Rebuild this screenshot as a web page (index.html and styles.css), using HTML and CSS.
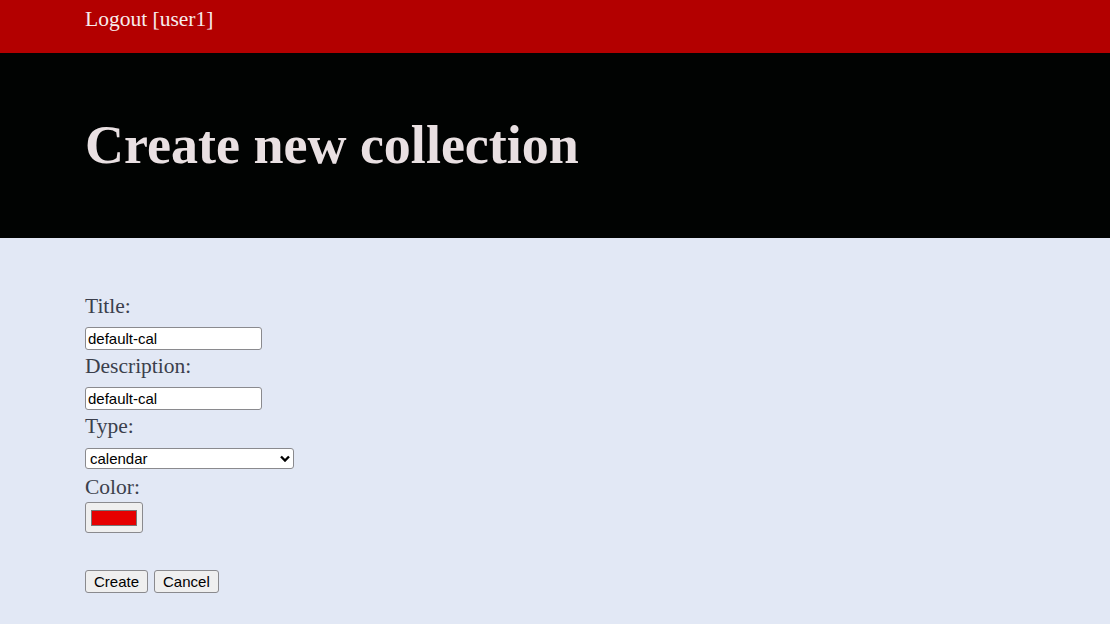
FILE: index.html
```html
<!DOCTYPE html>
<html>
<head>
<meta charset="utf-8">
<link rel="stylesheet" href="styles.css">
</head>
<body>
<div class="topbar"><a class="logout" href="#">Logout [user1]</a></div>
<header class="hero"><h1>Create new collection</h1></header>
<main class="content">
  <form class="form">
    <label class="lbl" for="t">Title:</label>
    <input class="txt" id="t" type="text" value="default-cal">
    <label class="lbl" for="d">Description:</label>
    <input class="txt" id="d" type="text" value="default-cal">
    <label class="lbl" for="ty">Type:</label>
    <select class="sel" id="ty"><option>calendar</option></select>
    <label class="lbl" for="c">Color:</label>
    <span class="color"><span class="swatch"></span></span>
    <div class="actions">
      <button class="btn" type="button">Create</button>
      <button class="btn" type="button">Cancel</button>
    </div>
  </form>
</main>
</body>
</html>
```
FILE: styles.css
```css
html, body { margin: 0; padding: 0; }
body {
  background: #e2e8f5;
  font-family: "Liberation Serif", "Times New Roman", serif;
  height: 624px;
  overflow: hidden;
}
.topbar {
  background: #b30000;
  height: 53px;
  padding-left: 85px;
  box-sizing: border-box;
}
.logout {
  color: #f7ecec;
  text-decoration: none;
  font-size: 21.5px;
  line-height: 38px;
  display: block;
}
.hero {
  background: #010302;
  height: 185px;
  padding-left: 85px;
  box-sizing: border-box;
  display: flex;
  align-items: center;
}
.hero h1 {
  margin: 0;
  color: #e9e0e2;
  font-size: 54px;
  font-weight: bold;
  position: relative;
  top: -1px;
}
.content {
  padding: 52px 85px 0;
}
.form { display: flex; flex-direction: column; align-items: flex-start; }
.lbl {
  display: block;
  font-size: 21.5px;
  line-height: 24px;
  color: #3b3f4c;
  margin-top: 4px;
  margin-bottom: 9px;
}
.txt {
  box-sizing: border-box;
  width: 177px;
  height: 23px;
  margin: 0;
  padding: 1px 2px;
  border: 1px solid #8a8a8e;
  border-radius: 3px;
  background: #fff;
  font-family: "Liberation Sans", Arial, sans-serif;
  font-size: 15px;
  color: #000;
}
.sel {
  box-sizing: border-box;
  width: 209px;
  height: 21px;
  margin: 1px 0 0 0;
  padding: 0 0 0 4px;
  border: 1px solid #8a8a8e;
  border-radius: 3px;
  background: #fff url("data:image/svg+xml,%3Csvg xmlns='http://www.w3.org/2000/svg' width='10' height='7' viewBox='0 0 10 7'%3E%3Cpath d='M1 1.5l4 4 4-4' fill='none' stroke='%23000' stroke-width='2.4'/%3E%3C/svg%3E") no-repeat right 3px center;
  -webkit-appearance: none;
  appearance: none;
  font-family: "Liberation Sans", Arial, sans-serif;
  font-size: 15px;
  line-height: 19px;
  color: #000;
}
.sel + .lbl { margin-top: 6px; margin-bottom: 3px; }
.color {
  box-sizing: border-box;
  width: 58px;
  height: 31px;
  border: 1px solid #8a8a8e;
  border-radius: 3px;
  background: #efefef;
  padding: 7px 5px 6px;
  display: block;
}
.swatch {
  display: block;
  height: 100%;
  background: #e60000;
  border: 1px solid #777;
  box-sizing: border-box;
}
.actions {
  display: flex;
  gap: 6px;
  margin-top: 37px;
}
.btn {
  box-sizing: border-box;
  height: 23px;
  padding: 0 8px;
  margin: 0;
  border: 1px solid #8a8a8e;
  border-radius: 3px;
  background: #efefef;
  font-family: "Liberation Sans", Arial, sans-serif;
  font-size: 15px;
  color: #000;
}
```
